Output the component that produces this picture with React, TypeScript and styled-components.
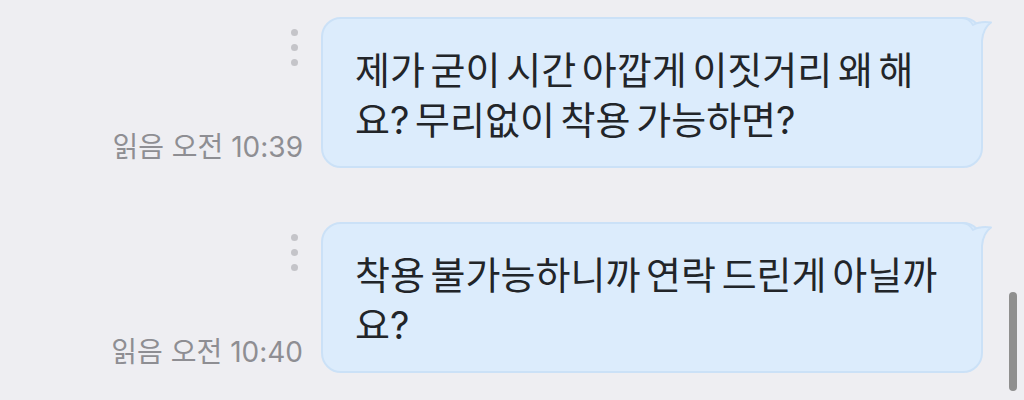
import React from 'react';
import styled, { createGlobalStyle } from 'styled-components';

const GlobalStyle = createGlobalStyle`
  html, body {
    margin: 0;
    padding: 0;
    background: #eeeef2;
  }
  body {
    font-family: Inter, "Noto Sans CJK KR", sans-serif;
    -webkit-font-smoothing: antialiased;
  }
`;

const messages = [
  { id: 1, text: '제가 굳이 시간 아깝게 이짓거리 왜 해요? 무리없이 착용 가능하면?', time: '10:39' },
  { id: 2, text: '착용 불가능하니까 연락 드린게 아닐까요?', time: '10:40' },
];

// top-right tail of the bubble, drawn over the rounded corner
function Tail() {
  return (
    <TailSvg width="40" height="40" viewBox="0 0 40 40">
      <path d="M0 1 L9 1 Q16 1 20 8 Q27 4 38 5.5 Q30 11 29 24 L29 40 L0 40 Z" fill="#dcecfc" />
      <path
        d="M0 1 L9 1 Q16 1 20 8 Q27 4 38 5.5 Q30 11 29 24 L29 40"
        fill="none"
        stroke="#cbe1f7"
        strokeWidth="2"
        strokeLinejoin="round"
      />
    </TailSvg>
  );
}

function App() {
  return (
    <Screen>
      <GlobalStyle />
      <Thread>
        {messages.map((m) => (
          <Row key={m.id}>
            <Meta>
              <MoreDots>
                <Dot />
                <Dot />
                <Dot />
              </MoreDots>
              <Stamp>읽음 오전 {m.time}</Stamp>
            </Meta>
            <Bubble>
              {m.text}
              <Tail />
            </Bubble>
          </Row>
        ))}
      </Thread>
      <ScrollThumb />
    </Screen>
  );
}

export default App;

const Screen = styled.div`
  position: relative;
  width: 1024px;
  height: 400px;
  overflow: hidden;
  background: #eeeef2;
`;

const Thread = styled.div`
  display: flex;
  flex-direction: column;
  gap: 54px;
  padding: 17px 41px 0 0;
`;

const Row = styled.div`
  display: flex;
  justify-content: flex-end;
  align-items: stretch;
  gap: 18px;
`;

const Meta = styled.div`
  display: flex;
  flex-direction: column;
  align-items: flex-end;
  justify-content: space-between;
`;

const MoreDots = styled.div`
  display: flex;
  flex-direction: column;
  gap: 8px;
  padding-top: 12px;
  margin-right: 5px;
`;

const Dot = styled.span`
  display: block;
  width: 7px;
  height: 7px;
  border-radius: 50%;
  background: #c4c4c9;
`;

const Stamp = styled.div`
  font-size: 28px;
  line-height: 32px;
  color: #8e8e93;
  white-space: nowrap;
  margin-bottom: 5px;
`;

const Bubble = styled.div`
  position: relative;
  box-sizing: border-box;
  width: 662px;
  padding: 26px 28px 21px 32px;
  border: 2px solid #cbe1f7;
  border-radius: 20px;
  background: #dcecfc;
  color: #222529;
  font-size: 38px;
  line-height: 50px;
  word-spacing: -5px;
`;

const TailSvg = styled.svg`
  position: absolute;
  top: -2px;
  right: -12px;
  display: block;
`;

const ScrollThumb = styled.div`
  position: absolute;
  top: 292px;
  right: 7px;
  width: 8px;
  height: 99px;
  border-radius: 4px;
  background: #8f8f8f;
`;
